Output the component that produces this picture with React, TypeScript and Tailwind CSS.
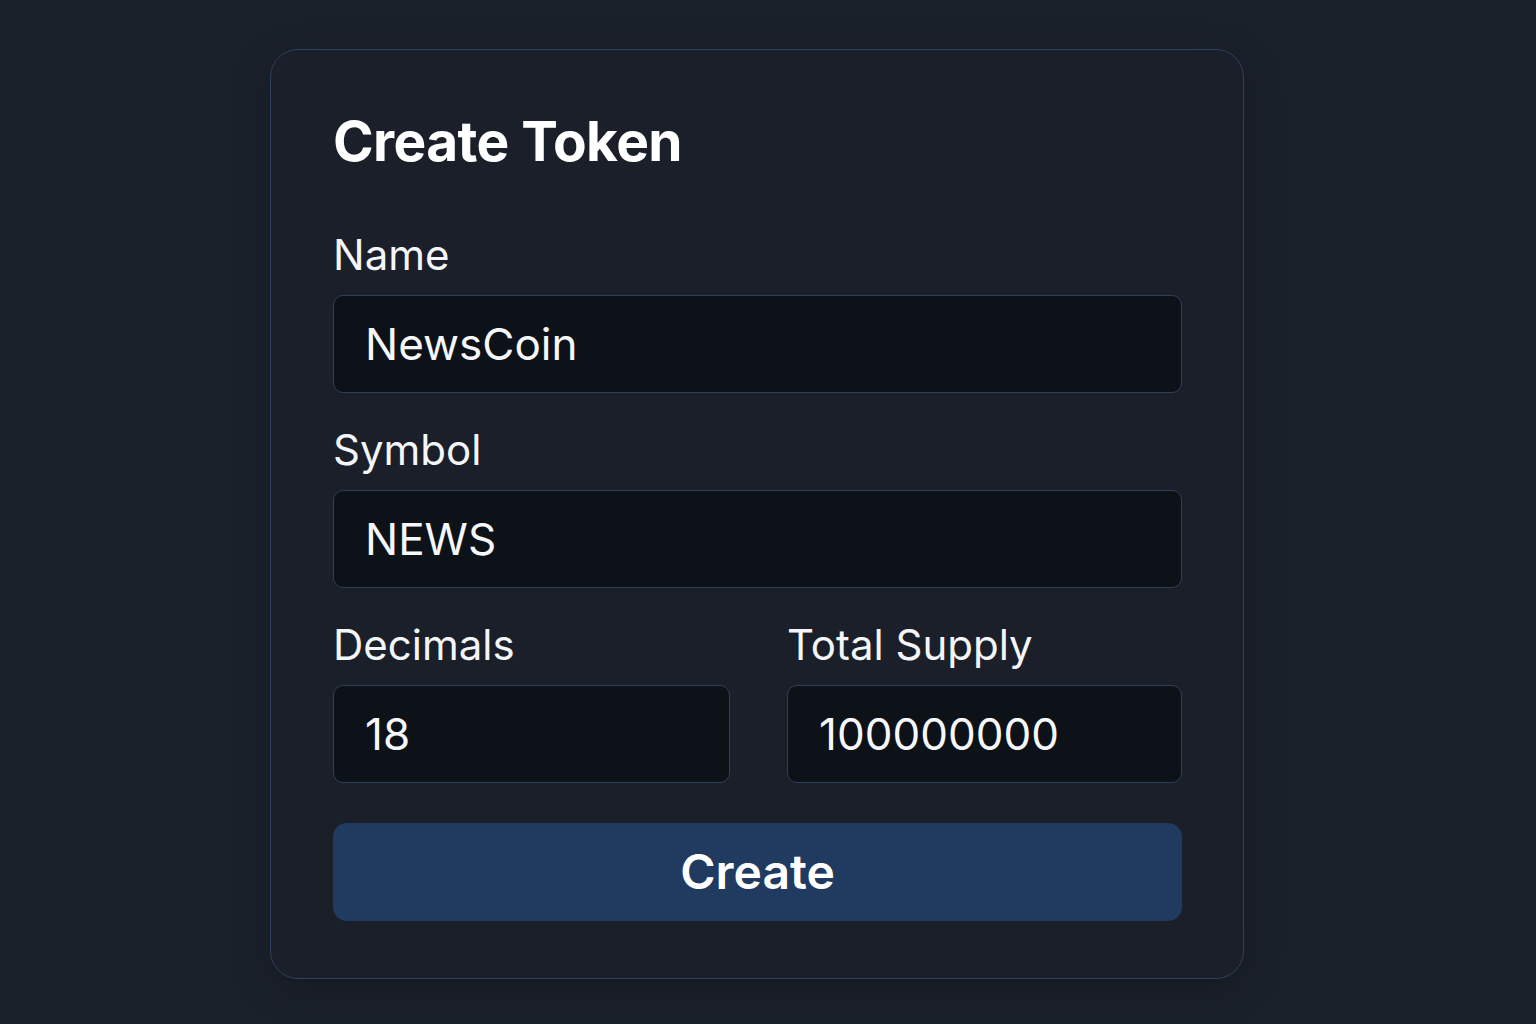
import React from 'react';

const Field = ({ label, value, className = '' }: { label: string; value: string; className?: string }) => (
  <div className={`flex flex-col ${className}`}>
    <label className="text-[42px] leading-[48px] text-[#f3f5f8] mb-[16px]">{label}</label>
    <input
      readOnly
      defaultValue={value}
      className="h-[98px] w-full rounded-[10px] border border-[#303f59] bg-[#0d1118] px-[31px] text-[44px] text-[#f5f7fa] outline-none"
    />
  </div>
);

function App() {
  return (
    <div
      className="min-h-screen w-full bg-[#1b212b] flex justify-center pt-[49px] pr-[22px]"
      style={{ fontFamily: 'Inter, "Noto Sans", sans-serif' }}
    >
      <div className="w-[974px] h-[930px] rounded-[28px] border border-[#314060] bg-[#1a1f29] shadow-[0_10px_40px_rgba(0,0,0,0.25)] pl-[62px] pr-[61px] pt-[59px] flex flex-col">
        <h1 className="text-[55px] leading-[64px] font-bold text-white tracking-[-0.6px] mb-[58px]">Create Token</h1>

        <Field label="Name" value="NewsCoin" className="mb-[33px]" />
        <Field label="Symbol" value="NEWS" className="mb-[33px]" />

        <div className="grid grid-cols-[397px_1fr] gap-x-[57px] mb-[40px]">
          <Field label="Decimals" value="18" />
          <Field label="Total Supply" value="100000000" />
        </div>

        <button className="h-[98px] w-full rounded-[14px] bg-[#213a60] text-[48px] font-semibold text-white">
          Create
        </button>
      </div>
    </div>
  );
}

export default App;
